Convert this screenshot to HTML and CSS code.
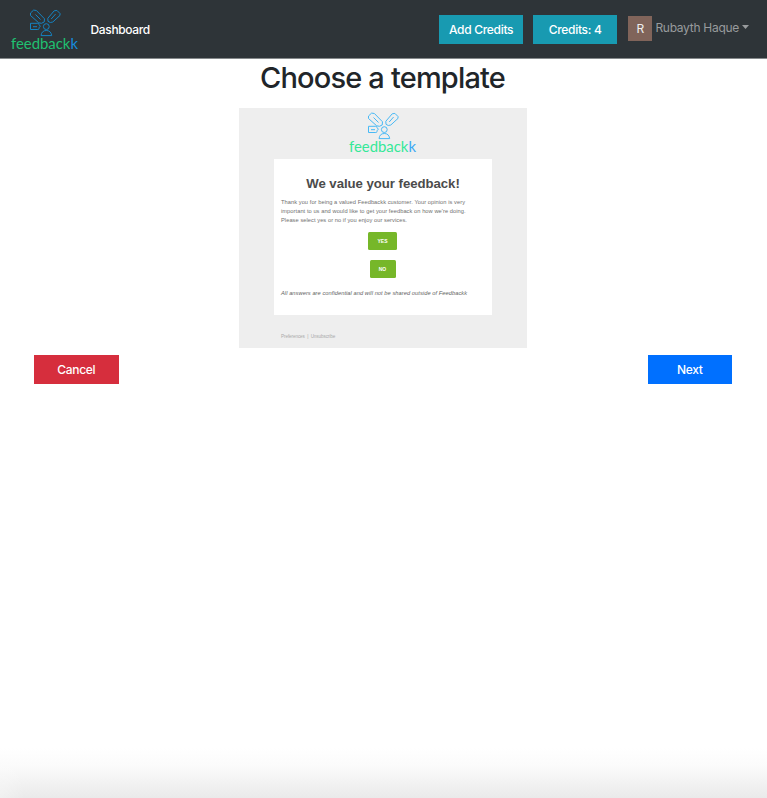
FILE: index.html
```html
<!DOCTYPE html>
<html lang="en">
<head>
<meta charset="utf-8">
<title>Feedbackk</title>
<link rel="stylesheet" href="styles.css">
</head>
<body>
<nav class="navbar">
  <svg class="logo logo-dim" viewBox="0 0 70 44">
    <g id="logo-lines" class="logo-lines">
      <path d="M19.5 4 L22.6 1.1 L25.4 1.5 L33.5 9.8 L33.2 13 L30.4 14.3 L27.7 13.8 L19.5 6.5 Z M24.5 5.5 L29.5 10.5"/>
      <path d="M49 4.5 L45.9 1.4 L43.2 1.8 L36.8 9.3 L37 12.3 L39.3 13.5 L41.8 13 L49 6.4 Z M44.6 5 L40.2 10"/>
      <path d="M19.5 14.3 H26.8 Q28 14.3 28 15.5 L29.3 17.2 L28 18.8 V19.5 Q28 20.5 26.8 20.5 H19.5 Z M22 17.7 H26"/>
      <circle cx="35.3" cy="17.6" r="2.9"/>
      <path d="M30 26.6 Q30.7 21.5 35.3 21.5 Q39.9 21.5 40.7 26.6 Z"/>
    </g>
    <text class="logo-text" x="0" y="40" textLength="67" lengthAdjust="spacingAndGlyphs">feedback<tspan class="logo-k">k</tspan></text>
  </svg>
  <a class="dashboard">Dashboard</a>
  <div class="account">
    <button class="btn info">Add Credits</button>
    <button class="btn info">Credits: 4</button>
    <div class="user"><span class="avatar">R</span><span class="name">Rubayth Haque</span><i class="caret"></i></div>
  </div>
</nav>
<main>
  <h1>Choose a template</h1>
  <section class="template">
    <svg class="logo" viewBox="0 0 70 44">
      <use href="#logo-lines"/>
      <text class="logo-text" x="0" y="40" textLength="67" lengthAdjust="spacingAndGlyphs">feedback<tspan class="logo-k">k</tspan></text>
    </svg>
    <div class="mail">
      <h2>We value your feedback!</h2>
      <p class="body">Thank you for being a valued Feedbackk customer. Your opinion is very<br>important to us and would like to get your feedback on how we're doing.<br>Please select yes or no if you enjoy our services.</p>
      <span class="answer yes">YES</span>
      <span class="answer no">NO</span>
      <p class="note">All answers are confidential and will not be shared outside of Feedbackk</p>
    </div>
    <p class="links">Preferences &nbsp;|&nbsp; Unsubscribe</p>
  </section>
  <div class="actions">
    <button class="btn danger">Cancel</button>
    <button class="btn primary">Next</button>
  </div>
</main>
<footer class="shade"></footer>
</body>
</html>
```
FILE: styles.css
```css
* { box-sizing: border-box; }
body {
  margin: 0;
  height: 798px;
  display: flex;
  flex-direction: column;
  overflow: hidden;
  background: #fff;
  color: #212529;
  font-family: Inter, "Liberation Sans", sans-serif;
}
h1, h2, p { margin: 0; white-space: nowrap; }
.navbar {
  height: 59px;
  flex: none;
  display: flex;
  align-items: flex-start;
  padding-left: 11px;
  background: #2e3438;
  border-bottom: 1px solid #85898b;
}
.logo {
  display: block;
  flex: none;
  width: 70px;
  height: 44px;
  overflow: visible;
  --line: #48b9f5;
  --word: #35e898;
  --last: #3da9f5;
}
.logo-dim { --line: #1583c2; --word: #20c071; --last: #168bdc; margin-top: 9px; }
.logo-lines { fill: none; stroke-width: 1; stroke-linejoin: round; }
.logo-lines path, .logo-lines circle { stroke: var(--line); }
.logo-text { fill: var(--word); font: 400 14.5px Lato, sans-serif; }
.logo-k { fill: var(--last); }
.dashboard {
  margin: 20px 0 0 9.5px;
  font-size: 12px;
  line-height: 20px;
  font-weight: 500;
  letter-spacing: -0.35px;
  color: #fff;
}
.account { display: flex; margin: 15px 18px 0 auto; }
.btn {
  width: 84.5px;
  height: 29px;
  padding: 0;
  border: 0;
  color: #fff;
  font: 500 12px/29px Inter, "Liberation Sans", sans-serif;
  letter-spacing: -0.3px;
  white-space: nowrap;
}
.info { background: #189ab1; margin-right: 9.5px; }
.user { display: flex; margin: 1px 0 0 1.5px; }
.avatar {
  width: 24px;
  height: 25px;
  background: #80645a;
  color: #eee;
  font-size: 12px;
  line-height: 25px;
  text-align: center;
}
.name { margin-left: 3px; font-size: 12px; line-height: 24px; color: #989b9d; letter-spacing: -0.28px; }
.caret {
  margin: 9px 0 0 3px;
  width: 7px;
  height: 4px;
  background: #989b9d;
  clip-path: polygon(0 0, 100% 0, 50% 100%);
}
h1 {
  height: 49px;
  padding: 1px 2px 0 0;
  text-align: center;
  font-size: 29px;
  line-height: 36px;
  font-weight: 550;
  letter-spacing: -0.82px;
}
.template {
  width: 288px;
  height: 240px;
  margin: 0 0 0 239px;
  padding-top: 4px;
  background: #eee;
  font-family: "Liberation Sans", sans-serif;
}
.template .logo { margin-left: 110px; }
.mail {
  width: 218px;
  height: 156px;
  margin: 3px 0 0 35px;
  padding: 17px 7px 0;
  background: #fff;
  display: flex;
  flex-direction: column;
  align-items: center;
}
.mail h2 { font-size: 13.2px; line-height: 16px; letter-spacing: -0.04px; color: #4b4b4b; }
.body { align-self: flex-start; margin-top: 6px; font-size: 5.7px; letter-spacing: 0.06px; line-height: 8.8px; color: #707070; }
.answer {
  height: 18px;
  margin-top: 7.6px;
  border-radius: 1.5px;
  background: #76b729;
  color: #fff;
  font-size: 5px;
  font-weight: 700;
  line-height: 18px;
  text-align: center;
}
.yes { width: 29px; margin-right: 1px; }
.no { width: 26px; margin-top: 10px; margin-right: 1px; }
.note { align-self: flex-start; margin-top: 11px; font-size: 5.7px; letter-spacing: 0.06px; line-height: 9px; font-style: italic; color: #636363; }
.links { margin: 17px 0 0 42px; font-size: 4.6px; letter-spacing: -0.09px; line-height: 9px; color: #aaa; }
.actions { display: flex; justify-content: space-between; padding: 7px 35px 0 34px; }
.danger { background: #d62e3d; }
.primary { background: #0070ff; }
.shade {
  height: 50px;
  flex: none;
  margin-top: auto;
  background: radial-gradient(ellipse 25px 55px at 0 100%, rgba(255,255,255,.3), transparent), linear-gradient(#fff, #fbfbfb 35%, #eaeaea);
}
```
